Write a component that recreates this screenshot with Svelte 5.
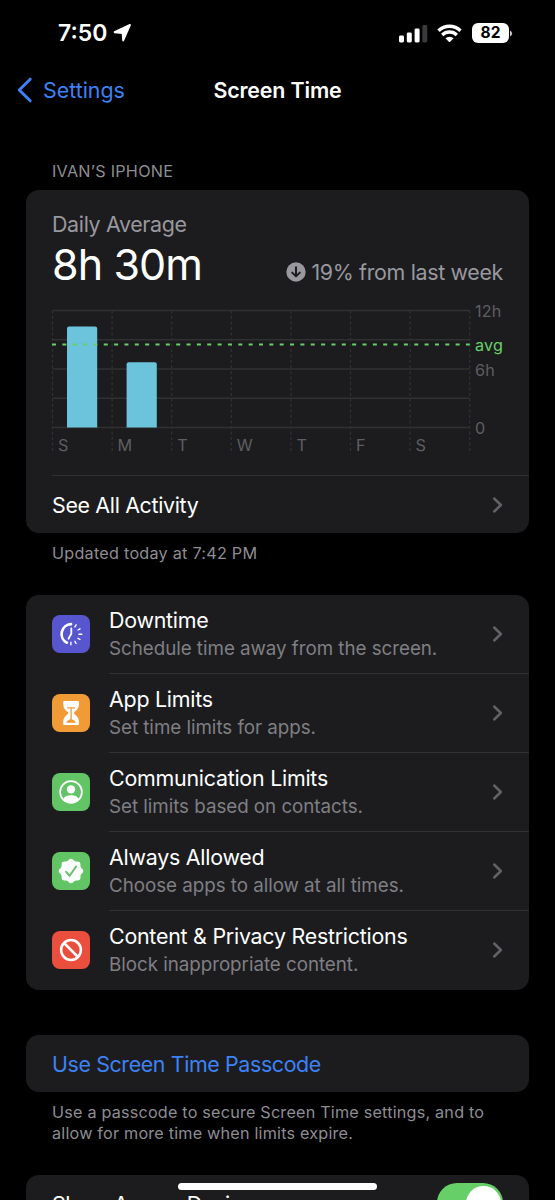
<script lang="ts">
	type Option = {
		icon: 'downtime' | 'limits' | 'contacts' | 'allowed' | 'restrictions';
		title: string;
		detail: string;
	};

	const options: Option[] = [
		{ icon: 'downtime', title: 'Downtime', detail: 'Schedule time away from the screen.' },
		{ icon: 'limits', title: 'App Limits', detail: 'Set time limits for apps.' },
		{ icon: 'contacts', title: 'Communication Limits', detail: 'Set limits based on contacts.' },
		{ icon: 'allowed', title: 'Always Allowed', detail: 'Choose apps to allow at all times.' },
		{
			icon: 'restrictions',
			title: 'Content & Privacy Restrictions',
			detail: 'Block inappropriate content.'
		}
	];

	const days = ['S', 'M', 'T', 'W', 'T', 'F', 'S'];
	const hours = [10.35, 6.7, 0, 0, 0, 0, 0];
	const average = 8.5;

	// chart geometry
	const left = 0.5;
	const top = 4.5;
	const plotHeight = 117;
	const column = 59.6;
	const plotRight = left + column * 7;
	const bottom = top + plotHeight;

	const y = (value: number) => bottom - (value / 12) * plotHeight;

	const bar = (value: number, index: number) => {
		const x = left + index * column + 14.5;
		const t = y(value);
		return `M${x} ${bottom}V${t + 2}q0-2 2-2h26.2q2 0 2 2V${bottom}z`;
	};

	// eight-lobed seal
	const seal =
		Array.from({ length: 64 }, (_, i) => {
			const a = (i / 64) * Math.PI * 2;
			const r = 11.4 + 0.9 * Math.cos(a * 8);
			return `${i ? 'L' : 'M'}${(19 + r * Math.sin(a)).toFixed(2)} ${(19 - r * Math.cos(a)).toFixed(2)}`;
		}).join('') + 'z';

	let shareAcrossDevices = $state(true);
</script>

{#snippet chevron()}
	<svg class="chevron" width="12" height="18" viewBox="0 0 12 18">
		<path d="M2.2 2.5L8.9 9l-6.7 6.500" />
	</svg>
{/snippet}

<div class="screen">
	<header class="status-bar">
		<div class="clock">
			<span>7:50</span>
			<svg width="19" height="20" viewBox="0 0 19 20">
				<path
					d="M1.600 9.200L17 1.900 10.200 17.400 9.600 10z"
					fill="#fff"
					stroke="#fff"
					stroke-width="1.900"
					stroke-linejoin="round"
				/>
			</svg>
		</div>
		<div class="indicators">
			<svg width="29" height="19" viewBox="0 0 29 19">
				<g fill="#fff">
					<rect x="0" y="11.5" width="5" height="7" rx="1.4" />
					<rect x="7.8" y="8.5" width="5" height="10" rx="1.4" />
					<rect x="15.6" y="4.5" width="5" height="14" rx="1.4" />
				</g>
				<rect x="23.3" y="1" width="5" height="17.5" rx="1.4" fill="#3a3a3c" />
			</svg>
			<svg class="wifi" width="25" height="19" viewBox="0 0 25 19">
				<g fill="none" stroke="#fff" stroke-width="3.400">
					<path d="M1.500 6.700a16 16 0 0 1 22 0" />
					<path d="M5.200 10.900a10.600 10.600 0 0 1 14.600 0" />
				</g>
				<path d="M8.400 14.200a6.200 6.200 0 0 1 8.200 0l-3.500 3.600q-.6.5-1.200 0z" fill="#fff" />
			</svg>
			<span class="battery">82</span>
			<svg class="nub" width="3" height="7" viewBox="0 0 3 7">
				<path d="M0 .5a3.2 3.2 0 0 1 0 6z" fill="#ccc" />
			</svg>
		</div>
	</header>

	<nav class="nav-bar">
		<button class="back" type="button">
			<svg width="16" height="26" viewBox="0 0 16 26">
				<path d="M13.200 2.200L2.200 13l11 10.800" />
			</svg>
			<span>Settings</span>
		</button>
		<h1>Screen Time</h1>
	</nav>

	<main>
		<h2 class="section-label">IVAN’S IPHONE</h2>

		<section class="card usage">
			<div class="usage-head">
				<p class="label">Daily Average</p>
				<div class="totals">
					<strong>8h 30m</strong>
					<span class="change">
						<svg width="20" height="20" viewBox="0 0 20 20">
							<circle cx="10" cy="10" r="9.700" fill="#98989e" />
							<path d="M10 5.200v9M6.200 10.600l3.800 3.800 3.800-3.800" />
						</svg>
						<span>19% from last week</span>
					</span>
				</div>
			</div>

			<svg class="chart" width="477" height="154" viewBox="0 0 477 154">
				{#each [0, 3, 6, 9, 12] as value}
					<path class="grid" d="M{left} {y(value)}H{plotRight}" />
				{/each}
				{#each Array(8) as _, i}
					<path class="grid dashed" d="M{left + i * column} {top}V148" />
				{/each}
				{#each hours as value, i}
					{#if value}
						<path d={bar(value, i)} fill="#6bc4dc" />
					{/if}
				{/each}
				<path class="average" d="M0 {y(average) - 0.1}H{plotRight}" />
				{#each days as day, i}
					<text class="tick" x={left + i * column + 5.5} y="145">{day}</text>
				{/each}
				<text class="tick" x="423" y="11">12h</text>
				<text class="tick avg" x="423" y="44.5">avg</text>
				<text class="tick" x="423" y="69.5">6h</text>
				<text class="tick" x="423" y="127.5">0</text>
			</svg>

			<button class="see-all" type="button">
				<span>See All Activity</span>
				{@render chevron()}
			</button>
		</section>

		<p class="note updated">Updated today at 7:42 PM</p>

		<section class="card options">
			{#each options as option}
				<button class="option" type="button">
					<span class="tile {option.icon}">
						<svg width="38" height="38" viewBox="0 0 38 38">
							{#if option.icon === 'downtime'}
								<g fill="none" stroke="#fff" stroke-linecap="round">
									<path d="M19 9.2a9.8 9.8 0 0 0-4.1 18.5" stroke-width="2.700" />
									<path d="M19.300 13.500v5.300l-2.800 5" stroke-width="1.800" />
									<path
										d="M22.900 11.900l1.200-2.100M26 15l2-1.200M26.900 19.200h2.900M26 23.300l2 1.200M22.900 26.300l1.200 2.100M18.900 27.300v2.500"
										stroke-width="1.400"
									/>
								</g>
							{:else if option.icon === 'limits'}
								<path
									d="M12.300 7h13.600q1.100 0 1.100 1.200c0 5.400-1 6.800-4.600 9.700q-1.100 1.100 0 2.200c3.600 2.900 4.600 4.300 4.600 9.700q0 1.200-1.100 1.200H12.300q-1.100 0-1.100-1.200c0-5.400 1-6.800 4.600-9.700q1.100-1.100 0-2.200c-3.600-2.900-4.600-4.300-4.600-9.700q0-1.200 1.100-1.200z"
									fill="#fff"
								/>
								<path
									d="M15.300 13.900h7.600M19.100 14v12.200M15.200 28.200c.7-1.300 2.200-1.600 3.900-2.700 1.700 1.100 3.200 1.400 3.900 2.700z"
									fill="#f19b37"
									stroke="#f19b37"
									stroke-width="1.300"
								/>
							{:else if option.icon === 'contacts'}
								<circle cx="19" cy="19" r="10.900" fill="none" stroke="#fff" stroke-width="1.700" />
								<circle cx="19" cy="16.400" r="4.200" fill="#fff" />
								<path d="M11.300 26c1.300-3 4.300-3.800 7.700-3.800s6.400.8 7.700 3.800c-3.800 5.200-11.600 5.200-15.400 0z" fill="#fff" />
							{:else if option.icon === 'allowed'}
								<path d={seal} fill="#fff" />
								<path
									d="M14.100 19.900l3.500 3.900 6.500-9.300"
									fill="none"
									stroke="#63c466"
									stroke-width="2"
									stroke-linecap="round"
									stroke-linejoin="round"
								/>
							{:else}
								<g fill="none" stroke="#fff" stroke-width="2.500">
									<circle cx="19" cy="19" r="9.900" />
									<path d="M12 12l14 14" />
								</g>
							{/if}
						</svg>
					</span>
					<span class="option-body">
						<span class="option-text">
							<span class="title">{option.title}</span>
							<span class="detail">{option.detail}</span>
						</span>
						{@render chevron()}
					</span>
				</button>
			{/each}
		</section>

		<button class="card passcode" type="button"><span>Use Screen Time Passcode</span></button>
		<p class="note passcode-note">
			<span>Use a passcode to secure Screen Time settings, and to</span><br />
			<span>allow for more time when limits expire.</span>
		</p>

		<section class="card share">
			<span class="share-title">Share Across Devices</span>
			<button
				class="switch"
				class:on={shareAcrossDevices}
				type="button"
				role="switch"
				aria-label="Share Across Devices"
				aria-checked={shareAcrossDevices}
				onclick={() => (shareAcrossDevices = !shareAcrossDevices)}
			>
				<span class="knob"></span>
			</button>
		</section>
	</main>

	<div class="home-indicator"></div>
</div>

<style>
	:global(body) {
		margin: 0;
		background: #000;
	}

	.screen,
	.screen * {
		box-sizing: border-box;
	}

	.screen {
		position: relative;
		display: flex;
		flex-direction: column;
		width: 555px;
		height: 1200px;
		overflow: hidden;
		background: #000;
		color: #fff;
		font-family: Inter, 'Liberation Sans', sans-serif;
		font-size: 21.4px;
	}

	h1,
	h2,
	p {
		margin: 0;
	}

	button {
		padding: 0;
		border: 0;
		background: none;
		color: inherit;
		font: inherit;
		letter-spacing: inherit;
		text-align: left;
	}

	svg {
		display: block;
		flex: none;
	}

	.status-bar {
		display: flex;
		flex: none;
		align-items: center;
		justify-content: space-between;
		height: 66px;
		padding: 0 42px 0 58px;
	}

	.clock {
		display: flex;
		align-items: center;
		gap: 6px;
		font-size: 23px;
		font-weight: 600;
		letter-spacing: 0;
	}

	.indicators {
		display: flex;
		align-items: center;
	}

	.wifi {
		margin: 0 10px 0 9px;
	}

	.battery {
		width: 37px;
		height: 20px;
		border-radius: 6px;
		background: #fff;
		color: #000;
		font-size: 15.5px;
		font-weight: 700;
		line-height: 20px;
		text-align: center;
	}

	.nub {
		margin-left: 1px;
	}

	.nav-bar {
		display: grid;
		flex: none;
		grid-template-columns: 1fr auto 1fr;
		align-items: center;
		height: 48px;
		padding: 0 17px 1px;
	}

	.back {
		display: flex;
		align-items: center;
		gap: 10px;
		color: #3c82f6;
	}

	.back path {
		fill: none;
		stroke: #3c82f6;
		stroke-width: 3;
		stroke-linecap: round;
		stroke-linejoin: round;
	}

	h1 {
		font-size: 21.4px;
		font-weight: 600;
		letter-spacing: -0.15px;
	}

	main {
		display: flex;
		flex-direction: column;
		padding: 0 26px;
	}

	.section-label {
		height: 76px;
		padding: 47px 26px 0;
		color: #8d8d93;
		font-size: 16.2px;
		font-weight: 400;
		letter-spacing: 0.25px;
		line-height: 20px;
	}

	.card {
		flex: none;
		width: 503px;
		border-radius: 13px;
		background: #1c1c1e;
	}

	.usage {
		display: flex;
		flex-direction: column;
		height: 343px;
		letter-spacing: -0.33px;
	}

	.usage-head {
		flex: none;
		height: 116px;
		padding: 20px 26px 0;
	}

	.label {
		color: #98989e;
		line-height: 28px;
	}

	.totals {
		display: flex;
		align-items: flex-start;
		justify-content: space-between;
	}

	.totals strong {
		font-size: 43px;
		font-weight: 400;
		letter-spacing: -0.9px;
		line-height: 52px;
	}

	.change {
		display: flex;
		align-items: center;
		gap: 5px;
		height: 28px;
		margin-top: 20px;
		color: #98989e;
	}

	.change path {
		fill: none;
		stroke: #1c1c1e;
		stroke-width: 2;
		stroke-linecap: round;
		stroke-linejoin: round;
	}

	.chart {
		margin: 0 0 15px 26px;
		overflow: visible;
	}

	.grid {
		stroke: #303032;
		stroke-width: 1.3;
	}

	.dashed {
		stroke-dasharray: 3 2.5;
	}

	.average {
		stroke: #66cf68;
		stroke-width: 2;
		stroke-dasharray: 4 6.35;
	}

	.tick {
		fill: #5e5e62;
		font-size: 16.2px;
		letter-spacing: 0.2px;
	}

	.avg {
		fill: #66cf68;
	}

	.see-all {
		display: flex;
		align-items: center;
		justify-content: space-between;
		flex: 1;
		margin-left: 26px;
		padding-right: 25px;
		border-top: 1px solid #303032;
	}

	.chevron path {
		fill: none;
		stroke: #626266;
		stroke-width: 2.5;
		stroke-linecap: round;
		stroke-linejoin: round;
	}

	.note {
		padding: 0 26px;
		color: #8d8d93;
		font-size: 16.2px;
		letter-spacing: 0.2px;
		line-height: 21px;
	}

	.updated {
		height: 62px;
		padding-top: 10px;
		letter-spacing: 0.25px;
	}

	.option {
		display: flex;
		align-items: center;
		width: 100%;
		height: 79px;
		padding-left: 26px;
	}

	.tile {
		width: 38px;
		height: 38px;
		margin-bottom: 1px;
		border-radius: 8px;
	}

	.downtime {
		background: #5856ce;
	}

	.limits {
		background: #f19b37;
	}

	.contacts,
	.allowed {
		background: #63c466;
	}

	.restrictions {
		background: #ea4e3d;
	}

	.option-body {
		display: flex;
		align-items: center;
		justify-content: space-between;
		flex: 1;
		height: 79px;
		margin-left: 19px;
		padding-right: 25px;
		border-bottom: 1px solid #303032;
	}

	.option:last-child .option-body {
		border-bottom-color: transparent;
	}

	.option-text {
		display: flex;
		flex-direction: column;
	}

	.title {
		letter-spacing: -0.24px;
		line-height: 28px;
	}

	.detail {
		padding-top: 1px;
		color: #7f7f84;
		font-size: 18.8px;
		letter-spacing: -0.04px;
		line-height: 28px;
	}

	.passcode {
		height: 57px;
		margin-top: 45px;
		padding-left: 26px;
		color: #3c82f6;
		letter-spacing: -0.38px;
	}

	.passcode-note {
		height: 83px;
		padding-top: 10px;
	}

	.share {
		display: flex;
		align-items: flex-start;
		justify-content: space-between;
		height: 57px;
		padding: 8px 26px;
	}

	.share-title {
		letter-spacing: -0.45px;
		line-height: 42px;
	}

	.switch {
		display: flex;
		width: 66px;
		height: 40px;
		padding: 2.5px;
		border-radius: 20px;
		background: #39393d;
	}

	.switch.on {
		justify-content: flex-end;
		background: #66cf68;
	}

	.knob {
		width: 35px;
		height: 35px;
		border-radius: 50%;
		background: #fff;
	}

	.home-indicator {
		position: absolute;
		bottom: 10px;
		left: 178px;
		width: 199px;
		height: 7px;
		border-radius: 4px;
		background: #fff;
	}
</style>
